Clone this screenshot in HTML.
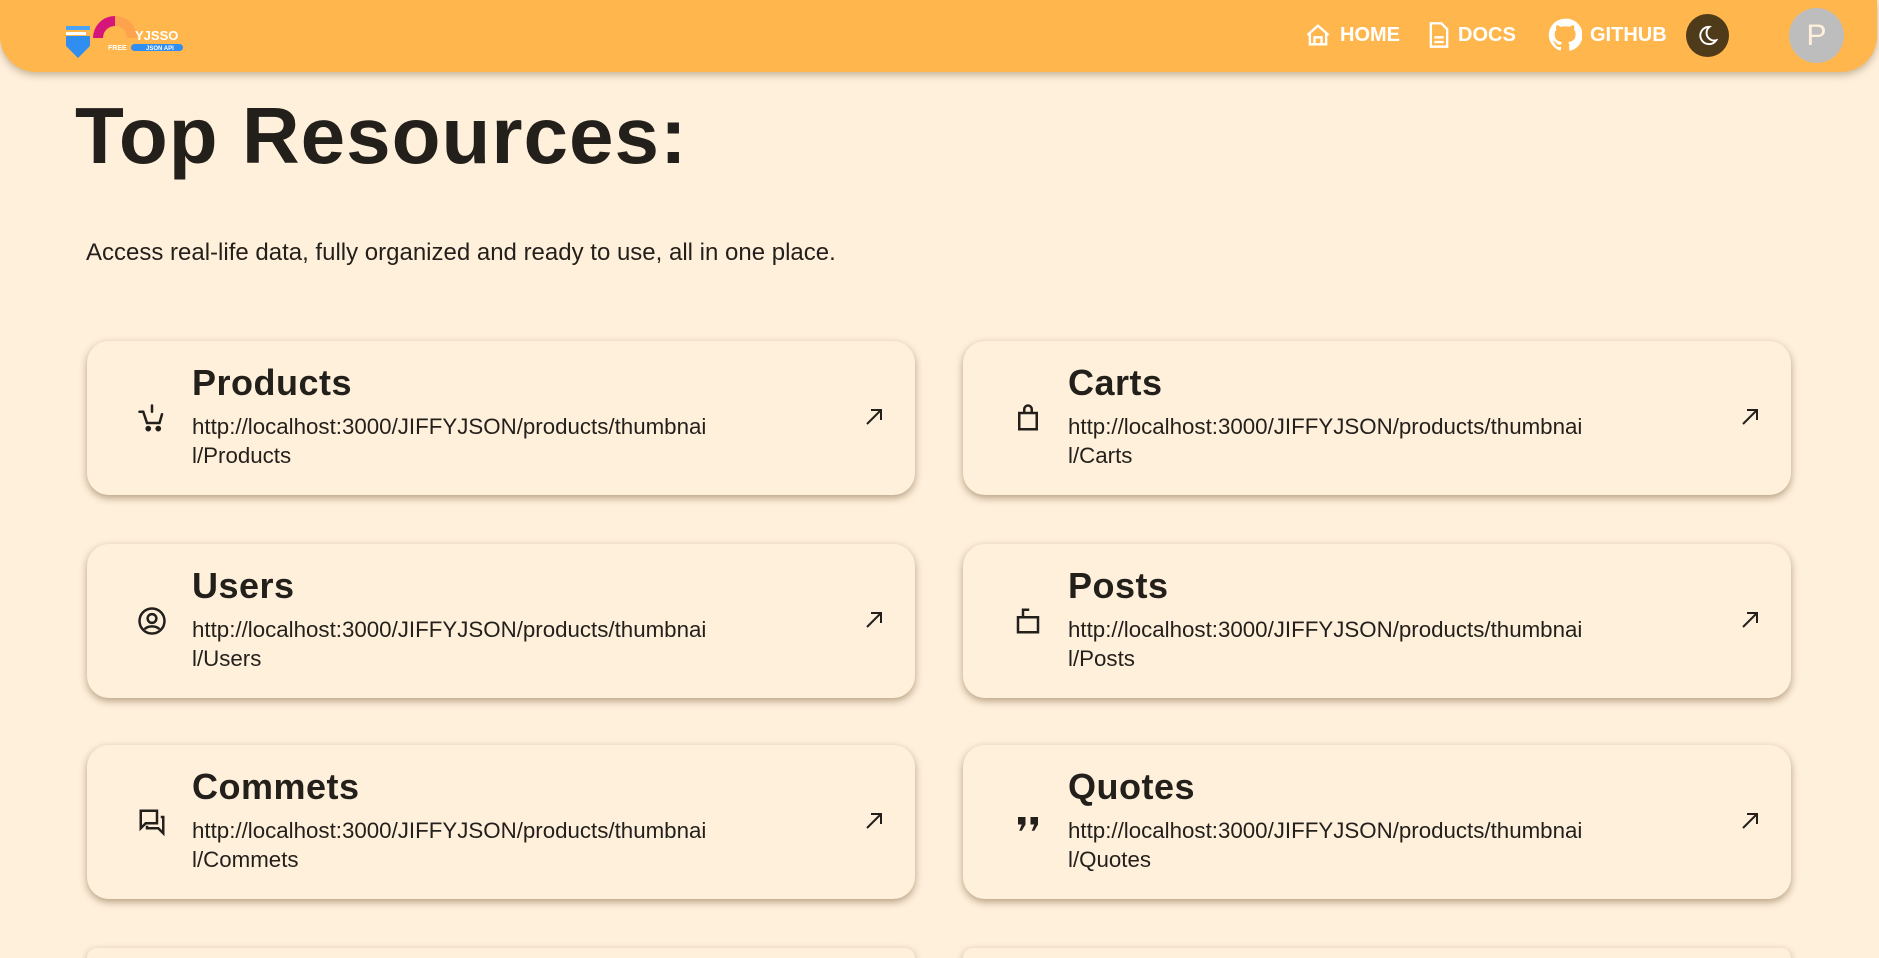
<!DOCTYPE html>
<html style="width:1879px;height:958px;overflow:hidden"><head><meta charset="utf-8"><style>
*{box-sizing:border-box;margin:0;padding:0}
body{width:1879px;height:958px;overflow:hidden;background:#fff0dc;font-family:"Liberation Sans",sans-serif;color:#231f1a;position:relative}
.hdr{position:absolute;left:0;top:0;width:1877px;height:72px;background:#ffb74d;border-radius:0 0 36px 36px;box-shadow:0 3px 8px rgba(90,60,20,.35)}
.nav{position:absolute;top:35px;transform:translateY(-50%);color:#fff;font-weight:bold;font-size:20px;display:flex;align-items:center;gap:8px}
h1{position:absolute;left:75px;top:90px;font-size:80px;font-weight:bold;letter-spacing:1px}
.sub{position:absolute;left:86px;top:239px;font-size:24px}
.card{position:absolute;width:828px;height:154px;background:#fff0dc;border-radius:22px;box-shadow:0 3px 8px rgba(90,60,20,.45)}
.card .t{position:absolute;left:105px;top:21px;font-size:36px;font-weight:bold;letter-spacing:.5px}
.card .u{position:absolute;left:105px;top:71px;font-size:22.3px;line-height:29px;width:560px}
.card .ic{position:absolute;left:50px;top:62px;width:30px;height:30px}
.card .ar{position:absolute;left:775px;top:64px;width:24px;height:24px}
</style></head><body>
<div class="hdr">
 <svg style="position:absolute;left:63px;top:10px" width="125" height="50" viewBox="0 0 125 50">
  <path d="M3 26h24v10L15 48 3 36z" fill="#2f8ef0"/>
  <rect x="3" y="16" width="24" height="4" fill="#4aa3f5"/><rect x="3" y="22" width="20" height="3" fill="#fff"/>
  <path d="M30 28a22 22 0 0 1 22-22v10a12 12 0 0 0-12 12z" fill="#d6157a"/>
  <path d="M52 6a22 22 0 0 1 22 22H64a12 12 0 0 0-12-12z" fill="#ffa24d"/>
  <text x="72" y="30" font-family="Liberation Sans" font-weight="bold" font-size="13" fill="#fff">YJSSO</text>
  <text x="45" y="40" font-family="Liberation Sans" font-weight="bold" font-size="7" fill="#fff">FREE</text>
  <rect x="68" y="34" width="52" height="7" rx="3.5" fill="#2f8ef0"/>
  <text x="83" y="40" font-family="Liberation Sans" font-weight="bold" font-size="6" fill="#fff">JSON API</text>
 </svg>
 <div class="nav" style="left:1304px"><svg width="28" height="28" viewBox="0 0 24 24" fill="none" stroke="#fff" stroke-width="2"><path d="M3 12l9-8 9 8M5 10v10h14V10M9 20v-6h6v6"/></svg>HOME</div>
 <div class="nav" style="left:1428px"><svg width="22" height="28" viewBox="0 0 18 24" fill="none" stroke="#fff" stroke-width="2"><path d="M2 2h9l5 5v15H2zM5 14h8M5 18h8"/></svg>DOCS</div>
 <div class="nav" style="left:1548px"><svg width="34" height="34" viewBox="0 0 24 24"><path fill="#fff" d="M12 .5A11.5 11.5 0 0 0 8.4 22.9c.6.1.8-.2.8-.6v-2c-3.2.7-3.9-1.5-3.9-1.5-.5-1.3-1.3-1.700-1.3-1.7-1-.7.1-.7.1-.7 1.2.1 1.8 1.2 1.8 1.2 1 1.8 2.7 1.3 3.4 1 .1-.8.4-1.3.7-1.6-2.6-.3-5.3-1.3-5.3-5.7 0-1.3.5-2.3 1.2-3.1-.1-.3-.5-1.5.1-3.1 0 0 1-.3 3.2 1.2a11 11 0 0 1 5.8 0c2.2-1.5 3.2-1.2 3.2-1.2.6 1.6.2 2.8.1 3.1.8.8 1.2 1.8 1.2 3.1 0 4.4-2.7 5.4-5.3 5.7.4.4.8 1.1.8 2.2v3.3c0 .3.2.7.8.6A11.5 11.5 0 0 0 12 .5z"/></svg>GITHUB</div>
 <div style="position:absolute;left:1686px;top:14px;width:43px;height:43px;border-radius:50%;background:#4f3a1a"><svg style="position:absolute;left:10px;top:10px" width="23" height="23" viewBox="0 0 24 24" fill="none" stroke="#fff" stroke-width="2"><path d="M14 3a9 9 0 1 0 7 14A8 8 0 0 1 14 3z"/></svg></div>
 <div style="position:absolute;left:1789px;top:8px;width:55px;height:55px;border-radius:50%;background:#bdbdbd;color:#fff0dc;font-size:30px;text-align:center;line-height:55px">P</div>
</div>
<h1>Top Resources:</h1>
<div class="sub">Access real-life data, fully organized and ready to use, all in one place.</div>

<div class="card" style="left:87px;top:341px"><svg class="ic" viewBox="0 0 24 24" fill="none" stroke="#231f1a" stroke-width="2"><path d="M2 7h3l3 9h10l2-7M12 2v5" stroke-linecap="round"/><circle cx="9" cy="20.5" r="1.3" fill="#231f1a"/><circle cx="17" cy="20.5" r="1.3" fill="#231f1a"/></svg><div class="t">Products</div><div class="u">http://localhost:3000/JIFFYJSON/products/thumbnai<br>l/Products</div><svg class="ar" viewBox="0 0 24 24" fill="none" stroke="#231f1a" stroke-width="2"><path d="M5 19L19 5M9 5h10v10"/></svg></div>
<div class="card" style="left:963px;top:341px"><svg class="ic" viewBox="0 0 24 24" fill="none" stroke="#231f1a" stroke-width="2"><path d="M5 8h14v13H5zM9 8V5a3 3 0 0 1 6 0v3"/></svg><div class="t">Carts</div><div class="u">http://localhost:3000/JIFFYJSON/products/thumbnai<br>l/Carts</div><svg class="ar" viewBox="0 0 24 24" fill="none" stroke="#231f1a" stroke-width="2"><path d="M5 19L19 5M9 5h10v10"/></svg></div>
<div class="card" style="left:87px;top:544px"><svg class="ic" viewBox="0 0 24 24" fill="none" stroke="#231f1a" stroke-width="2"><circle cx="12" cy="12" r="10"/><circle cx="12" cy="10" r="3.5"/><path d="M6 18.5c3-3 9-3 12 0"/></svg><div class="t">Users</div><div class="u">http://localhost:3000/JIFFYJSON/products/thumbnai<br>l/Users</div><svg class="ar" viewBox="0 0 24 24" fill="none" stroke="#231f1a" stroke-width="2"><path d="M5 19L19 5M9 5h10v10"/></svg></div>
<div class="card" style="left:963px;top:544px"><svg class="ic" viewBox="0 0 24 24" fill="none" stroke="#231f1a" stroke-width="2"><path d="M4 9h16v12H4zM8 9V3h5"/></svg><div class="t">Posts</div><div class="u">http://localhost:3000/JIFFYJSON/products/thumbnai<br>l/Posts</div><svg class="ar" viewBox="0 0 24 24" fill="none" stroke="#231f1a" stroke-width="2"><path d="M5 19L19 5M9 5h10v10"/></svg></div>
<div class="card" style="left:87px;top:745px"><svg class="ic" viewBox="0 0 24 24" fill="none" stroke="#231f1a" stroke-width="2"><path d="M3 3h13v10H7l-4 4zM19 8h2v13l-4-4H8v-2"/></svg><div class="t">Commets</div><div class="u">http://localhost:3000/JIFFYJSON/products/thumbnai<br>l/Commets</div><svg class="ar" viewBox="0 0 24 24" fill="none" stroke="#231f1a" stroke-width="2"><path d="M5 19L19 5M9 5h10v10"/></svg></div>
<div class="card" style="left:963px;top:745px"><svg class="ic" viewBox="0 0 24 24" fill="#231f1a"><path d="M4 8h6v6l-3 5H5l2-5H4zM14 8h6v6l-3 5h-2l2-5h-3z"/></svg><div class="t">Quotes</div><div class="u">http://localhost:3000/JIFFYJSON/products/thumbnai<br>l/Quotes</div><svg class="ar" viewBox="0 0 24 24" fill="none" stroke="#231f1a" stroke-width="2"><path d="M5 19L19 5M9 5h10v10"/></svg></div>
<div class="card" style="left:87px;top:948px;height:10px;border-radius:22px 22px 0 0"></div>
<div class="card" style="left:963px;top:948px;height:10px;border-radius:22px 22px 0 0"></div>
</body></html>
